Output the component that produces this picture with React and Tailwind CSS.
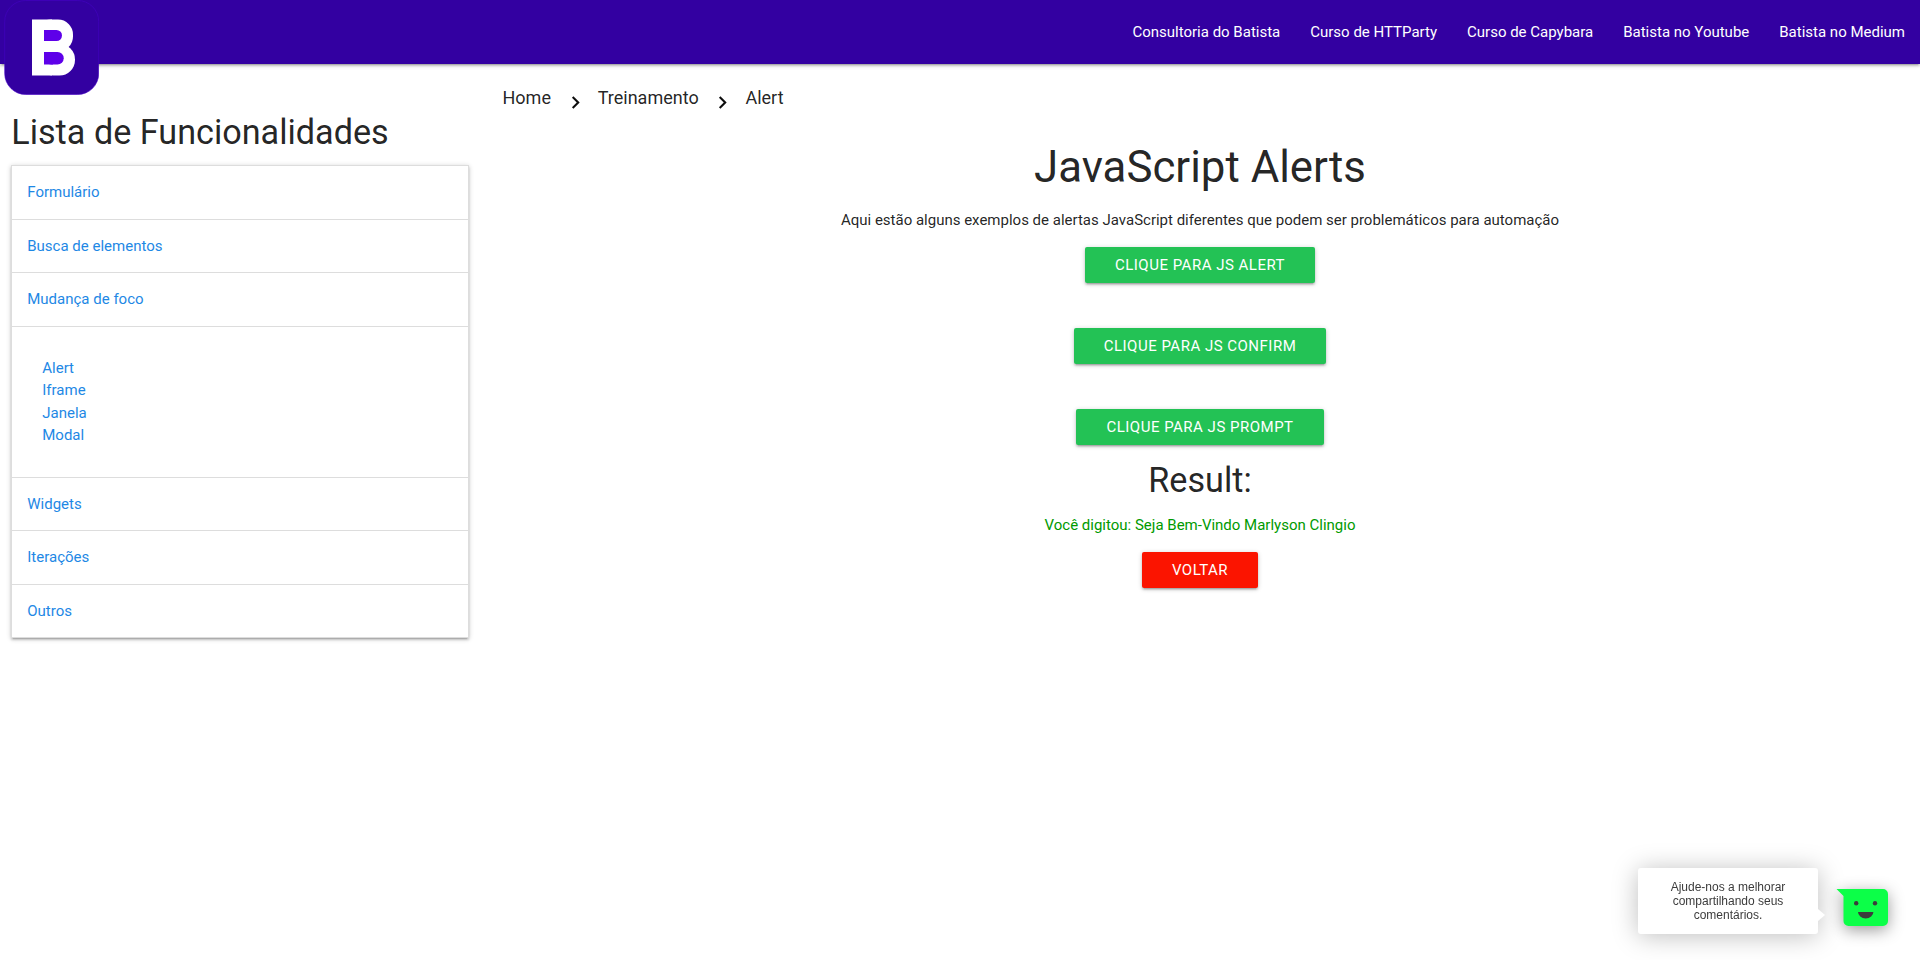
import React from "react";

const navLinks = [
  "Consultoria do Batista",
  "Curso de HTTParty",
  "Curso de Capybara",
  "Batista no Youtube",
  "Batista no Medium",
];

const menu = [
  { title: "Formulário" },
  { title: "Busca de elementos" },
  { title: "Mudança de foco", items: ["Alert", "Iframe", "Janela", "Modal"] },
  { title: "Widgets" },
  { title: "Iterações" },
  { title: "Outros" },
];

const crumbs = ["Home", "Treinamento", "Alert"];

function Logo() {
  return (
    <svg viewBox="0 0 95 95" className="h-[95px] w-[95px]" aria-hidden="true">
      <rect x="0.7" y="0.5" width="94" height="94" rx="21" fill="#3300a1" stroke="#4500c4" strokeWidth="0.6" />
      <rect x="28" y="19.5" width="20" height="56" fill="#fff" />
      <rect x="32" y="19.5" width="37" height="32" rx="15" fill="#fff" />
      <rect x="34" y="44" width="37" height="31.5" rx="15.5" fill="#fff" />
      <rect x="40" y="30" width="9" height="11" fill="#5e00e9" />
      <rect x="41" y="30" width="17" height="11" rx="5.5" fill="#5e00e9" />
      <rect x="40" y="52" width="9" height="12.5" fill="#5e00e9" />
      <rect x="41" y="52" width="18.7" height="12.5" rx="6.2" fill="#5e00e9" />
    </svg>
  );
}

function Chevron() {
  return (
    <svg viewBox="0 0 24 24" className="mr-[10px] ml-[11.8px] mt-[9px] h-[25px] w-[25px]" aria-hidden="true">
      <path d="M10 6 8.59 7.41 13.17 12l-4.58 4.59L10 18l6-6z" fill="rgba(0,0,0,0.95)" />
    </svg>
  );
}

function Button({ children, red }) {
  return (
    <button
      className={
        "block h-9 rounded-[2px] px-[30px] text-[15px] leading-9 tracking-[0.5px] text-white uppercase shadow-[0_2px_2px_0_rgba(0,0,0,0.14),0_3px_1px_-2px_rgba(0,0,0,0.12),0_1px_5px_0_rgba(0,0,0,0.2)] " +
        (red ? "bg-[#fb1400]" : "bg-[#23c255]")
      }
    >
      {children}
    </button>
  );
}

function Sidebar() {
  return (
    <aside className="w-[480px] px-[11.25px] pt-[50px]">
      <h4 className="mb-[13.68px] text-[34.2px] leading-[37.62px]">Lista de Funcionalidades</h4>
      <ul className="border-x border-t border-[#ddd] text-[#1e88e5] shadow-[0_2px_2px_0_rgba(0,0,0,0.14),0_3px_1px_-2px_rgba(0,0,0,0.12),0_1px_5px_0_rgba(0,0,0,0.2)]">
        {menu.map((m) => (
          <li key={m.title}>
            <div className="border-b border-[#ddd] p-[15px]">{m.title}</div>
            {m.items && (
              <div className="border-b border-[#ddd] p-[30px]">
                {m.items.map((i) => (
                  <div key={i}>{i}</div>
                ))}
              </div>
            )}
          </li>
        ))}
      </ul>
    </aside>
  );
}

function Feedback() {
  return (
    <div className="fixed right-[32px] bottom-[26px] flex items-end font-['Liberation_Sans',sans-serif]">
      <div className="relative flex h-[66px] w-[180px] items-center justify-center rounded-[3px] bg-white text-center text-[12px] leading-[14px] text-[#3c3c3c] shadow-[0_2px_26px_rgba(0,0,0,0.26)]">
        <p className="w-[130px]">Ajude-nos a melhorar compartilhando seus comentários.</p>
        <svg viewBox="0 0 7 12" className="absolute top-[41px] left-[180px] h-3 w-[7px]" aria-hidden="true">
          <path d="M0 0 7 6 0 12z" fill="#fff" />
        </svg>
      </div>
      <svg
        viewBox="0 0 52 37"
        className="mb-2 ml-[18px] h-[37px] w-[52px] drop-shadow-[0_4px_8px_rgba(0,0,0,0.4)]"
        aria-hidden="true"
      >
        <path d="M0.5 0H47a5 5 0 0 1 5 5V32a5 5 0 0 1-5 5H12.5a5 5 0 0 1-5-5V7z" fill="#0cff48" />
        <circle cx="20.2" cy="14.2" r="2.2" fill="#3c3c3c" />
        <circle cx="39" cy="14.2" r="2.2" fill="#3c3c3c" />
        <path d="M22 23H37.4a7.7 6.5 0 0 1-15.4 0z" fill="#3c3c3c" />
      </svg>
    </div>
  );
}

export default function App() {
  return (
    <div className="min-h-[960px] bg-white font-[Roboto,sans-serif] text-[15px] leading-[22.5px] text-[rgba(0,0,0,0.87)]">
      <header className="relative flex h-16 justify-end bg-[#3300a1] shadow-[0_2px_2px_0_rgba(0,0,0,0.14),0_3px_1px_-2px_rgba(0,0,0,0.12),0_1px_5px_0_rgba(0,0,0,0.2)]">
        <div className="absolute top-0 left-[4px]">
          <Logo />
        </div>
        <nav className="flex text-white">
          {navLinks.map((l) => (
            <a key={l} className="px-[15px] leading-[64px]">
              {l}
            </a>
          ))}
        </nav>
      </header>
      <div className="flex">
        <Sidebar />
        <main className="w-[1440px] px-[11.25px]">
          <div className="flex h-[68px] items-center pl-[11.25px] text-[18px]">
            {crumbs.map((c, i) => (
              <React.Fragment key={c}>
                {i > 0 && <Chevron />}
                <span>{c}</span>
              </React.Fragment>
            ))}
          </div>
          <div className="flex flex-col items-center pt-[11px]">
            <h3 className="text-[43.8px] leading-[48.18px]">JavaScript Alerts</h3>
            <p className="mt-[17.5px]">
              Aqui estão alguns exemplos de alertas JavaScript diferentes que podem ser problemáticos para automação
            </p>
            <div className="mt-[16px] flex flex-col items-center gap-[45px]">
              <Button>Clique para JS Alert</Button>
              <Button>Clique para JS Confirm</Button>
              <Button>Clique para JS Prompt</Button>
            </div>
            <h4 className="mt-[17px] text-[34.2px] leading-[37.62px]">Result:</h4>
            <p className="mt-[14px] mb-[16px] text-[#009a00]">Você digitou: Seja Bem-Vindo Marlyson Clingio</p>
            <Button red>Voltar</Button>
          </div>
        </main>
      </div>
      <Feedback />
    </div>
  );
}
